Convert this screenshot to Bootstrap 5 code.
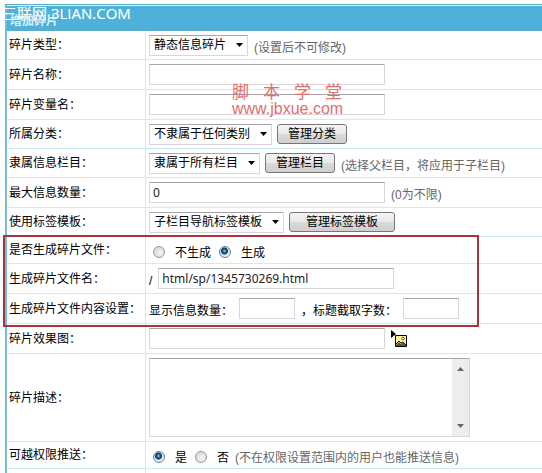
<!DOCTYPE html>
<html lang="zh-CN">
<head>
<meta charset="utf-8">
<meta name="viewport" content="width=device-width, initial-scale=1">
<title>增加碎片</title>
<link href="https://cdn.jsdelivr.net/npm/bootstrap@5.3.0/dist/css/bootstrap.min.css" rel="stylesheet">
<style>
body{font:12px/18px "Liberation Sans","Noto Sans CJK SC",sans-serif;color:#000;background:#fff}
.panel{margin:4px 0 0 5px;border-left:2px solid #74bdd8;border-top:1px solid #62a9c2}
.panel-title{font-size:12px;line-height:18px;color:#d8f3fb;background:#4db1da;border-top:1px solid #d8f5fb;border-bottom:1px solid #62a9c4;height:26px;padding:6px 0 0 3px}
.line{border-bottom:1px solid #cdebf2;min-height:30px}
.line-low{min-height:27px}
.line-mid{min-height:29px}
.line-tall{min-height:88px}
.line-end{border-bottom:0;min-height:4px}
.name{width:139px;padding-left:2px;border-right:1px solid #cdebf2;display:flex;align-items:center;white-space:nowrap;flex:none}
.field{display:flex;align-items:center;padding-left:3px;flex:1;white-space:nowrap}
.field-gap{gap:6px}
.form-control.box{width:236px;height:21px;flex:none;padding:0 3px;font:12px/18px "Noto Sans","Noto Sans CJK SC",sans-serif;color:#222;border:1px solid #ddd3dc;border-top-color:#aaa2aa;border-radius:1px}
.form-control.box-short{width:56px}
.form-select.pick{width:auto;height:21px;flex:none;padding:0 20px 0 4px;font:12px/18px "Liberation Sans","Noto Sans CJK SC",sans-serif;color:#000;border:1px solid #ddd3dc;border-top-color:#aaa2aa;border-radius:1px;background-image:url("data:image/svg+xml,%3Csvg xmlns='http://www.w3.org/2000/svg' viewBox='0 0 7 4'%3E%3Cpath d='M0 0h7L3.500 4z'/%3E%3C/svg%3E");background-size:7px 4px;background-position:right 4px center}
.btn.tool{height:20px;flex:none;padding:0 10px;margin-left:5px;font-size:12px;line-height:16px;color:#000;border:1px solid #777;border-radius:3px;background:linear-gradient(#f4f4f4,#e9e9e9 48%,#d9d9d9 52%,#cfcfcf)}
.btn.tool-wide{padding:0 16px}
.hint{color:#666;margin-left:6px;padding-top:5px}
.lower{padding-top:5px}
.form-check-input.dot{width:12px;height:12px;margin:4px 10px 0 4px;flex:none;border:1px solid #999;background:radial-gradient(circle at 60% 60%,#f6f6f6,#cfcfcf)}
.form-check-input.dot:checked{border-color:#5b7f9b;background:radial-gradient(circle at 45% 40%,#8fd4ee 0,#1c4f78 2px,#14395c 3px,#d5e4ee 4px,#eef4f8 6px)}
.marked{position:relative}
.frame{position:absolute;top:-2px;left:-4px;width:476px;bottom:-3px;border:2px solid #a83538;pointer-events:none}
.memo{width:321px;height:79px;border:1px solid #ddd3dc;border-top-color:#aaa2aa}
.form-control.memo-text{font-size:12px;resize:none;border:0;border-radius:0;padding:2px 3px;overflow:hidden}
.memo-bar{width:17px;background:#ededed;flex:none}
.stamp-site{position:absolute;top:4px;left:2px;font:15px/18px "Open Sans","Noto Sans CJK SC",sans-serif;color:#fff;text-shadow:0 0 1px #8ccbe2;white-space:nowrap;pointer-events:none}
.stamp-school{position:absolute;top:84px;left:232px;color:#e0706c;pointer-events:none;white-space:nowrap}
.stamp-name{font-size:17px;line-height:18px;display:flex;gap:14px}
.stamp-url{font-size:16px;line-height:14px}
</style>
<script src="https://cdn.jsdelivr.net/npm/bootstrap@5.3.0/dist/js/bootstrap.bundle.min.js" defer></script>
</head>
<body class="position-relative overflow-hidden">
<form class="panel">
  <h1 class="panel-title fw-bold m-0">增加碎片</h1>
  <div class="line line-mid d-flex">
    <label class="name" for="kind">碎片类型：</label>
    <div class="field"><select class="form-select pick" id="kind"><option>静态信息碎片</option></select><span class="hint">(设置后不可修改)</span></div>
  </div>
  <div class="line d-flex">
    <label class="name" for="title">碎片名称：</label>
    <div class="field"><input class="form-control box" id="title" type="text"></div>
  </div>
  <div class="line d-flex">
    <label class="name" for="varname">碎片变量名：</label>
    <div class="field"><input class="form-control box" id="varname" type="text"></div>
  </div>
  <div class="line line-mid d-flex">
    <label class="name" for="category">所属分类：</label>
    <div class="field"><select class="form-select pick" id="category"><option>不隶属于任何类别</option></select><button class="btn tool" type="button">管理分类</button></div>
  </div>
  <div class="line line-mid d-flex">
    <label class="name" for="column">隶属信息栏目：</label>
    <div class="field"><select class="form-select pick" id="column"><option>隶属于所有栏目</option></select><button class="btn tool" type="button">管理栏目</button><span class="hint">(选择父栏目，将应用于子栏目)</span></div>
  </div>
  <div class="line d-flex">
    <label class="name" for="limit">最大信息数量：</label>
    <div class="field"><input class="form-control box" id="limit" type="text" value="0"><span class="hint">(0为不限)</span></div>
  </div>
  <div class="line line-mid d-flex">
    <label class="name" for="template">使用标签模板：</label>
    <div class="field"><select class="form-select pick" id="template"><option>子栏目导航标签模板</option></select><button class="btn tool tool-wide" type="button">管理标签模板</button></div>
  </div>
  <div class="marked">
    <div class="line line-low d-flex" role="radiogroup" aria-labelledby="makefile">
      <span class="name" id="makefile">是否生成碎片文件：</span>
      <div class="field">
        <input class="form-check-input dot" type="radio" name="make" id="make-no"><label class="lower me-1" for="make-no">不生成</label>
        <input class="form-check-input dot" type="radio" name="make" id="make-yes" checked><label class="lower" for="make-yes">生成</label>
      </div>
    </div>
    <div class="line d-flex">
      <label class="name" for="filename">生成碎片文件名：</label>
      <div class="field field-gap"><span class="lower">/</span><input class="form-control box" id="filename" type="text" value="html/sp/1345730269.html"></div>
    </div>
    <div class="line d-flex">
      <span class="name">生成碎片文件内容设置：</span>
      <div class="field field-gap">
        <label class="lower" for="count">显示信息数量：</label><input class="form-control box box-short" id="count" type="text">
        <label class="lower" for="chars">，标题截取字数：</label><input class="form-control box box-short" id="chars" type="text">
      </div>
    </div>
    <div class="frame"></div>
  </div>
  <div class="line d-flex">
    <label class="name" for="image">碎片效果图：</label>
    <div class="field">
      <input class="form-control box" id="image" type="text">
      <button class="btn p-0 border-0 lh-1 ms-1" type="button" aria-label="选择图片">
        <svg class="d-block" width="18" height="18" viewBox="0 0 18 18"><path d="M2 0l5 4-5 4z" fill="#000"/><path d="M6.500 5.500h11v11h-11z" fill="#fff59a" stroke="#000"/><path d="M7 15l3-3 2 2 2-2 3 3v1H7z" fill="#555"/><path d="M7 14l3-3 2 2 2-1 3 3" fill="none" stroke="#222"/><circle cx="14" cy="8.500" r="1.300" fill="#fff" stroke="#333" stroke-width=".8"/></svg>
      </button>
    </div>
  </div>
  <div class="line line-tall d-flex">
    <label class="name" for="memo">碎片描述：</label>
    <div class="field">
      <div class="memo d-flex">
        <textarea class="form-control memo-text" id="memo"></textarea>
        <div class="memo-bar d-flex flex-column justify-content-between align-items-center py-2">
          <svg width="7" height="4" viewBox="0 0 7 4"><path d="M0 4h7L3.500 0z" fill="#666"/></svg>
          <svg width="7" height="4" viewBox="0 0 7 4"><path d="M0 0h7L3.500 4z" fill="#666"/></svg>
        </div>
      </div>
    </div>
  </div>
  <div class="line line-low d-flex" role="radiogroup" aria-labelledby="push">
    <span class="name" id="push">可越权限推送：</span>
    <div class="field">
      <input class="form-check-input dot" type="radio" name="push" id="push-yes" checked><label class="lower me-1" for="push-yes">是</label>
      <input class="form-check-input dot" type="radio" name="push" id="push-no"><label class="lower" for="push-no">否</label><span class="hint">(不在权限设置范围内的用户也能推送信息)</span>
    </div>
  </div>
  <div class="line line-end d-flex"><div class="name"></div></div>
</form>
<div class="stamp-site">三联网 3LIAN.COM</div>
<div class="stamp-school">
  <div class="stamp-name"><span>脚</span><span>本</span><span>学</span><span>堂</span></div>
  <div class="stamp-url">www.jbxue.com</div>
</div>
</body>
</html>
